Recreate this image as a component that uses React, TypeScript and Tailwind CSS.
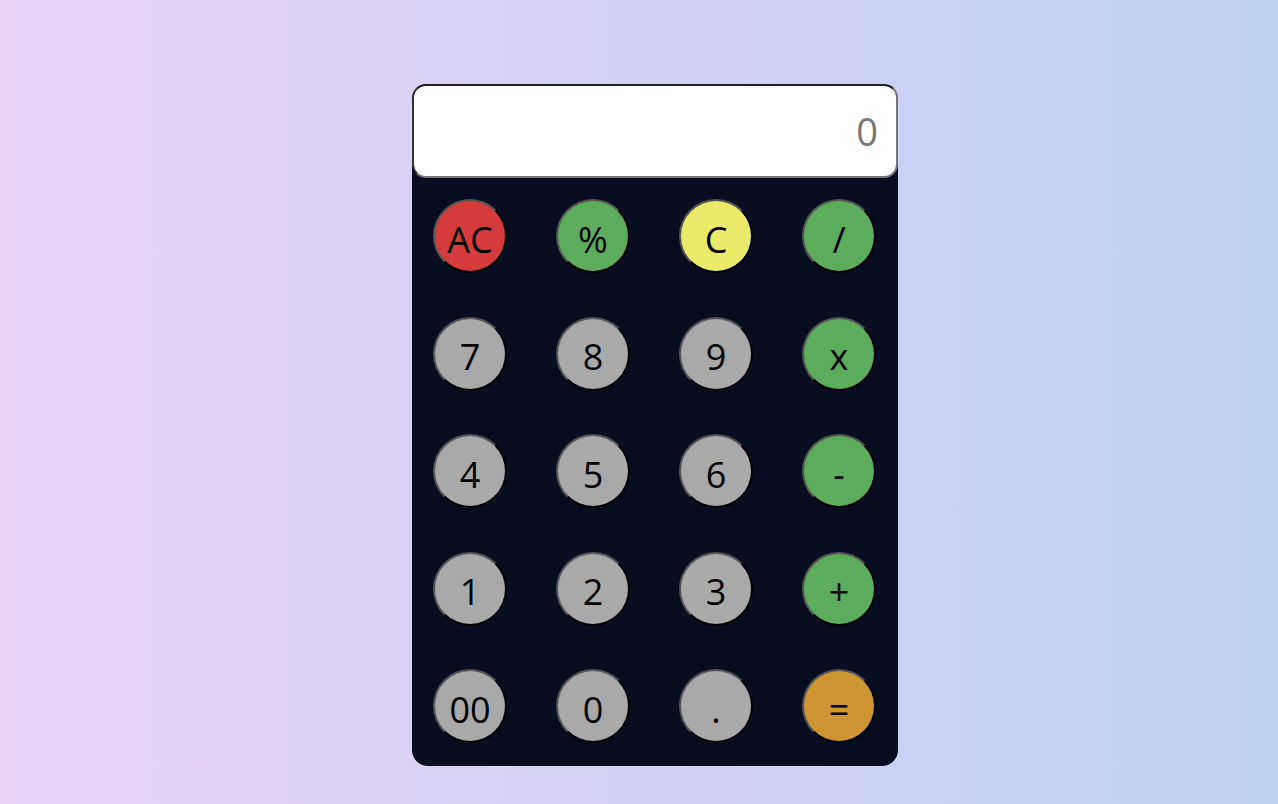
const keys = [
  { label: "AC", color: "bg-[#d63b3b]" },
  { label: "%", color: "bg-[#5cad5b]" },
  { label: "C", color: "bg-[#ebeb6b]" },
  { label: "/", color: "bg-[#5cad5b]" },
  { label: "7", color: "bg-[#a9a9a9]" },
  { label: "8", color: "bg-[#a9a9a9]" },
  { label: "9", color: "bg-[#a9a9a9]" },
  { label: "x", color: "bg-[#5cad5b]" },
  { label: "4", color: "bg-[#a9a9a9]" },
  { label: "5", color: "bg-[#a9a9a9]" },
  { label: "6", color: "bg-[#a9a9a9]" },
  { label: "-", color: "bg-[#5cad5b]" },
  { label: "1", color: "bg-[#a9a9a9]" },
  { label: "2", color: "bg-[#a9a9a9]" },
  { label: "3", color: "bg-[#a9a9a9]" },
  { label: "+", color: "bg-[#5cad5b]" },
  { label: "00", color: "bg-[#a9a9a9]" },
  { label: "0", color: "bg-[#a9a9a9]" },
  { label: ".", color: "bg-[#a9a9a9]" },
  { label: "=", color: "bg-[#cd9633]" },
];

function App() {
  return (
    <div
      className="w-full h-screen flex justify-center pl-[32px] bg-gradient-to-r from-[#e9d4f6] to-[#bdd0f1]"
      style={{ fontFamily: '"Open Sans", "Noto Sans", sans-serif' }}
    >
      <div className="w-[486px] h-[682px] mt-[84px] bg-[#080d1f] rounded-[16px] flex flex-col">
        <div className="h-[94px] bg-white rounded-[14px] border-2 border-t-[#222] border-l-[#333] border-r-[#777] border-b-[#777] flex items-center justify-end pr-[18px]">
          <span className="text-[38px] text-[#777] leading-none">0</span>
        </div>

        <div className="grid grid-cols-[repeat(4,74px)] gap-x-[49px] gap-y-[43.5px] px-[21px] pt-[21px]">
          {keys.map((k) => (
            <button
              key={k.label}
              className={`w-[74px] h-[74px] rounded-full border-2 border-t-[#555] border-l-[#555] border-r-black border-b-black text-black text-[36px] leading-none flex items-center justify-center pt-[7px] ${k.color}`}
            >
              {k.label}
            </button>
          ))}
        </div>
      </div>
    </div>
  );
}

export default App;
